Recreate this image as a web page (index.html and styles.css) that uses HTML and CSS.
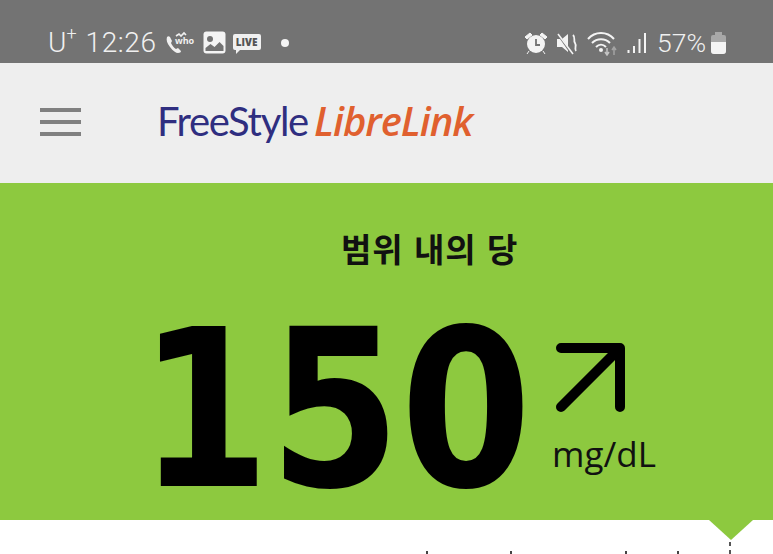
FILE: index.html
```html
<!DOCTYPE html>
<html lang="ko">

<head>
    <meta charset="UTF-8">
    <meta name="viewport" content="width=device-width, initial-scale=1.0">
    <title>FreeStyle LibreLink</title>
    <link rel="stylesheet" href="styles.css">
</head>

<body>
    <div class="status_bar">
        <div class="status_group">
            <span class="carrier">U<sup>+</sup></span>
            <span class="clock">12:26</span>
            <svg class="icon_who" width="30" height="26" viewBox="0 0 30 26">
                <path d="M2 7c-1 3 0 6 3 10s6 6 8 6c2 0 3-1 3-2l-3-3-2 1c-2-1-4-4-5-6l1-2-2-4c-1-1-2-1-3 0z" fill="#f0f0f0"/>
                <text x="10" y="14" class="who_text">who</text>
                <path d="M11 6l3-2 2 2 3-3 2 2" fill="none" stroke="#f0f0f0" stroke-width="1.6"/>
            </svg>
            <svg class="icon_gallery" width="23" height="23" viewBox="0 0 23 23">
                <rect x="0.5" y="0.5" width="22" height="22" rx="3" fill="#f4f4f4"/>
                <circle cx="7" cy="8" r="3" fill="#737373"/>
                <path d="M2.5 20v-3l5-4 4 3 5-5 4 4v5z" fill="#737373"/>
            </svg>
            <div class="live_badge"><span>LIVE</span></div>
            <span class="dot"></span>
        </div>
        <div class="status_group right">
            <svg class="icon_alarm" width="24" height="24" viewBox="0 0 24 24">
                <circle cx="12" cy="13" r="9" fill="#f4f4f4"/>
                <path d="M12 8v6h4" fill="none" stroke="#737373" stroke-width="1.8"/>
                <path d="M1 6l5-4 2 2-5 4zM23 6l-5-4-2 2 5 4zM5 20l-2 3M19 20l2 3" fill="#f4f4f4" stroke="#f4f4f4"/>
            </svg>
            <svg width="24" height="24" viewBox="0 0 24 24">
                <path d="M1 8h5l6-5v18l-6-5H1z" fill="#f4f4f4"/>
                <path d="M1 2l14 20" stroke="#737373" stroke-width="2"/>
                <path d="M2 3l15 20" stroke="#f4f4f4" stroke-width="1.6"/>
                <path d="M17 4c3 3 0 5 2 8s-1 5 1 8" fill="none" stroke="#f4f4f4" stroke-width="1.8"/>
            </svg>
            <svg width="32" height="26" viewBox="0 0 32 26">
                <path d="M1 9c7-8 19-8 26 0M5 13c5-5 13-5 18 0M9 17c3-3 7-3 10 0" fill="none" stroke="#f4f4f4" stroke-width="2"/>
                <circle cx="14" cy="20" r="2" fill="#f4f4f4"/>
                <path d="M20 18v6M18 22l2 3 2-3" fill="none" stroke="#c4c4c4" stroke-width="1.5"/>
                <path d="M27 25v-7M25 20l2-3 2 3" fill="none" stroke="#a4a4a4" stroke-width="1.5"/>
            </svg>
            <svg width="21" height="22" viewBox="0 0 21 22">
                <rect x="1.5" y="18" width="2" height="3" fill="#f4f4f4"/>
                <rect x="7" y="14" width="2" height="7" fill="#f4f4f4"/>
                <rect x="12.5" y="7" width="2" height="14" fill="#f4f4f4"/>
                <rect x="18" y="1" width="2" height="20" fill="#f4f4f4"/>
            </svg>
            <span class="percent">57%</span>
            <div class="battery"><div class="battery_level"></div></div>
        </div>
    </div>

    <div class="top_bar">
        <div class="menu_btn"><span></span><span></span><span></span></div>
        <div class="logo"><span class="logo_free">FreeStyle</span><span class="logo_libre">LibreLink</span></div>
    </div>

    <div class="reading">
        <div class="reading_title">범위 내의 당</div>
        <div class="reading_row">
            <div class="reading_value">150</div>
            <div class="reading_side">
                <svg width="74" height="74" viewBox="0 0 74 74">
                    <path d="M8 8h59v59M65 10L8 67" fill="none" stroke="#000" stroke-width="10" stroke-linecap="round" stroke-linejoin="round"/>
                </svg>
                <div class="reading_unit">mg/dL</div>
            </div>
        </div>
    </div>

    <div class="chart">
        <span class="pointer"></span>
        <span class="now_line"></span>
        <div class="chart_ticks">
            <span></span><span></span><span></span><span></span>
        </div>
    </div>
</body>

</html>
```

FILE: styles.css
```css
html,
body {
    margin: 0;
    height: 100%;
    overflow: hidden;
    background-color: #fff;
}

body {
    display: flex;
    flex-direction: column;
    font-family: "Open Sans", "Noto Sans CJK KR", sans-serif;
}

.status_bar {
    height: 63px;
    box-sizing: border-box;
    padding: 22px 47px 0 48px;
    display: flex;
    justify-content: space-between;
    align-items: center;
    background-color: #737373;
    color: #f0f0f0;
    font-family: "Roboto", sans-serif;
    font-weight: 300;
    font-size: 28px;
}

.status_group {
    display: flex;
    align-items: center;
    gap: 6px;
}

.status_group.right {
    gap: 7px;
}

.icon_alarm {
    margin-right: 1px;
}

.icon_gallery {
    margin-left: 2px;
}

.carrier {
    line-height: 30px;
    margin-right: 3px;
}

.carrier sup {
    font-size: 18px;
    line-height: 0;
    vertical-align: 12px;
}

.clock {
    letter-spacing: 0.6px;
    margin-right: 2px;
}

.who_text {
    font-family: "Open Sans", sans-serif;
    font-size: 9px;
    font-weight: 700;
    fill: #f0f0f0;
}

.live_badge {
    position: relative;
    width: 28px;
    height: 16px;
    margin: 0 0 2px 1px;
    background-color: #f0f0f0;
    border-radius: 2px;
    display: flex;
    align-items: center;
    justify-content: center;
}

.live_badge span {
    color: #555;
    font-family: "Open Sans", sans-serif;
    font-size: 10px;
    font-weight: 800;
}

.live_badge::after {
    content: "";
    position: absolute;
    left: 3px;
    bottom: -4px;
    border-top: 4px solid #f0f0f0;
    border-right: 4px solid transparent;
}

.dot {
    width: 8px;
    height: 8px;
    margin-left: 14px;
    border-radius: 50%;
    background-color: #f4f4f4;
}

.percent {
    margin-left: 3px;
    font-size: 26.5px;
}

.battery {
    position: relative;
    width: 15px;
    height: 19px;
    margin: 3px 0 0 -2px;
    border-radius: 2px 2px 3px 3px;
    background-color: #a8a8a8;
    display: flex;
    align-items: flex-end;
}

.battery::before {
    content: "";
    position: absolute;
    left: 4px;
    top: -3px;
    width: 7px;
    height: 3px;
    background-color: #a8a8a8;
}

.battery_level {
    width: 100%;
    height: 12px;
    border-radius: 0 0 3px 3px;
    background-color: #f4f4f4;
}

.top_bar {
    height: 120px;
    box-sizing: border-box;
    padding: 0 0 2px 40px;
    display: flex;
    align-items: center;
    background-color: #eeeeee;
}

.menu_btn {
    width: 41px;
    display: flex;
    flex-direction: column;
    gap: 8px;
}

.menu_btn span {
    height: 4px;
    background-color: #808080;
}

.logo {
    margin-left: 76px;
    display: flex;
    align-items: baseline;
    gap: 6px;
    line-height: 1;
    padding-bottom: 2px;
}

.logo_free {
    font-family: "Lato", sans-serif;
    font-size: 40px;
    letter-spacing: -1.3px;
    color: #2f2e80;
}

.logo_libre {
    font-family: "Open Sans", sans-serif;
    font-size: 40px;
    font-style: italic;
    font-weight: 600;
    letter-spacing: -1px;
    color: #e0602f;
}

.reading {
    height: 337px;
    display: flex;
    flex-direction: column;
    align-items: flex-start;
    padding-left: 150px;
    box-sizing: border-box;
    background-color: #8dc93f;
}

.reading_title {
    margin: 42px 0 0 191px;
    font-family: "Noto Sans CJK KR", sans-serif;
    font-size: 33px;
    font-weight: 700;
    letter-spacing: 1px;
    line-height: 46px;
    color: #111;
}

.reading_row {
    display: flex;
    align-items: flex-start;
    margin-top: 54px;
}

.reading_value {
    width: 370px;
    height: 170px;
    font-family: "DejaVu Sans", sans-serif;
    font-size: 220px;
    font-weight: 700;
    line-height: 170px;
    color: #000;
    transform: scaleX(0.855);
    white-space: nowrap;
    display: flex;
    justify-content: center;
}

.reading_side {
    margin: 15px 0 0 32px;
    display: flex;
    flex-direction: column;
}

.reading_side svg {
    margin-left: 1px;
}

.reading_unit {
    margin-top: 18px;
    font-family: "Open Sans", sans-serif;
    font-size: 35px;
    line-height: 44px;
    color: #111;
}

.chart {
    position: relative;
    flex: 1;
}

.pointer {
    position: absolute;
    left: 709px;
    top: 0;
    border-top: 20px solid #8dc93f;
    border-left: 22px solid transparent;
    border-right: 22px solid transparent;
}

.now_line {
    position: absolute;
    left: 729px;
    top: 22px;
    bottom: 0;
    width: 2px;
    background: repeating-linear-gradient(#555 0 4px, transparent 4px 8px);
}

.chart_ticks {
    position: absolute;
    left: 426px;
    bottom: 0;
    width: 253px;
    display: grid;
    grid-template-columns: 84px 115px 52px 2px;
}

.chart_ticks span {
    width: 2px;
    height: 3px;
    background-color: #444;
}
```
